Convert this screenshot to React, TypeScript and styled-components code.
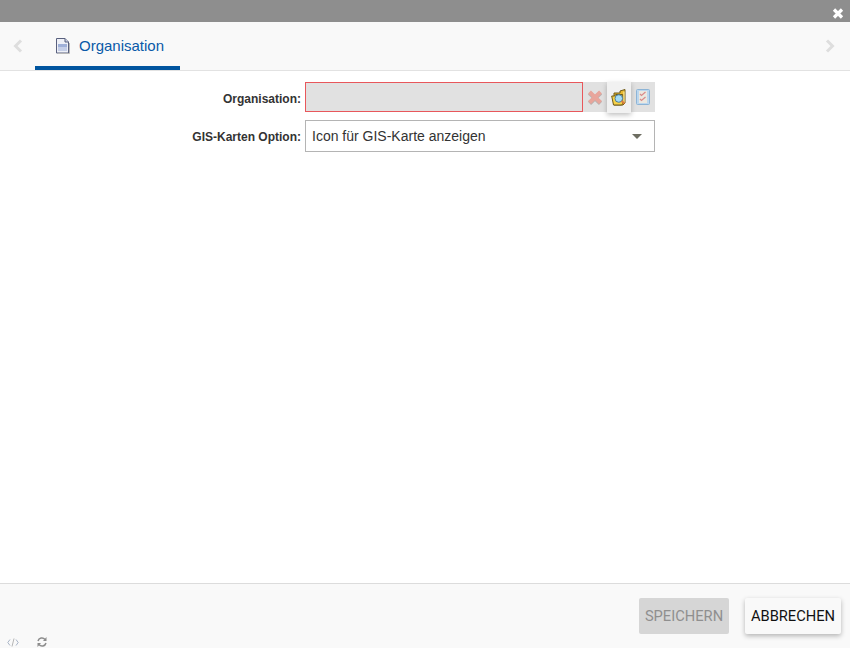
import React from "react";
import styled, { createGlobalStyle } from "styled-components";

const Global = createGlobalStyle`
  html, body { margin: 0; padding: 0; background: #fff; }
  body { font-family: "Liberation Sans", Arial, sans-serif; }
`;

const Page = styled.div`
  width: 850px;
  height: 648px;
  display: flex;
  flex-direction: column;
  overflow: hidden;
  background: #fff;
`;

const TitleBar = styled.div`
  height: 22px;
  flex: none;
  background: #8e8e8e;
  display: flex;
  justify-content: flex-end;
  align-items: flex-start;
  padding: 8px 6px 0 0;
  box-sizing: border-box;
`;

const TabBar = styled.div`
  height: 49px;
  flex: none;
  box-sizing: border-box;
  background: #f9f9f9;
  border-bottom: 1px solid #e2e2e2;
  display: flex;
  align-items: flex-start;
  padding: 0 14px 0 12px;
`;

const Chevron = styled.div`
  width: 12px;
  height: 48px;
  display: flex;
  align-items: center;
  justify-content: center;
`;

const Tab = styled.div`
  width: 145px;
  height: 48px;
  margin-left: 11px;
  box-sizing: border-box;
  border-bottom: 4px solid #00559f;
  display: flex;
  align-items: center;
  padding: 3px 0 0 20px;
  gap: 9px;
  color: #0a5aa8;
  font-size: 15px;
`;

const Spacer = styled.div`
  flex: 1;
`;

const Body = styled.div`
  flex: 1;
  padding-top: 11px;
  display: flex;
  flex-direction: column;
  gap: 8px;
`;

const Row = styled.div<{ $h: number }>`
  display: flex;
  align-items: flex-start;
  height: ${(p) => p.$h}px;
`;

const Label = styled.label`
  width: 301px;
  flex: none;
  padding-top: 10px;
  text-align: right;
  font-size: 12px;
  line-height: 14px;
  font-weight: bold;
  color: #333;
`;

const ReadonlyInput = styled.div`
  margin-left: 4px;
  width: 278px;
  height: 30px;
  box-sizing: border-box;
  background: #e1e1e1;
  border: 1px solid #e8575b;
`;

const ActionGroup = styled.div`
  display: flex;
  height: 30px;
  width: 72px;
  background: #e1e1e1;
`;

const ActionButton = styled.div<{ $active?: boolean }>`
  width: 24px;
  height: ${(p) => (p.$active ? 31 : 30)}px;
  display: flex;
  align-items: center;
  justify-content: center;
  background: ${(p) => (p.$active ? "#f1f1f1" : "transparent")};
  box-shadow: ${(p) => (p.$active ? "0 2px 5px rgba(0,0,0,.25)" : "none")};
`;

const Select = styled.div`
  margin-left: 4px;
  width: 350px;
  height: 32px;
  box-sizing: border-box;
  border: 1px solid #b4b4b4;
  background: #fff;
  display: flex;
  align-items: center;
  justify-content: space-between;
  padding: 0 12px 0 6px;
  font-size: 14px;
  color: #333;
`;

const Caret = styled.div`
  width: 0;
  height: 0;
  border-left: 5px solid transparent;
  border-right: 5px solid transparent;
  border-top: 5px solid #6e6e62;
`;

const Footer = styled.div`
  height: 65px;
  flex: none;
  box-sizing: border-box;
  background: #f9f9f9;
  border-top: 1px solid #dcdcdc;
  position: relative;
  display: flex;
  justify-content: flex-end;
  align-items: flex-start;
  gap: 16px;
  padding: 14px 9px 0 0;
`;

const FooterButton = styled.div<{ $primary?: boolean; $w: number }>`
  width: ${(p) => p.$w}px;
  height: 36px;
  border-radius: 2px;
  display: flex;
  align-items: center;
  justify-content: center;
  font-family: Roboto, "Liberation Sans", sans-serif;
  font-size: 14.7px;
  background: ${(p) => (p.$primary ? "#f9f9f9" : "#d6d6d6")};
  color: ${(p) => (p.$primary ? "#111" : "#8f8f8f")};
  box-shadow: ${(p) => (p.$primary ? "0 2px 5px rgba(0,0,0,.28)" : "none")};
`;

const DebugIcons = styled.div`
  position: absolute;
  left: 7px;
  bottom: 1px;
  display: flex;
  align-items: center;
  gap: 18px;
`;

const ChevronIcon = ({ right }: { right?: boolean }) => (
  <svg width="10" height="14" viewBox="0 0 10 14">
    <path
      d={right ? "M2 1.5 7.5 7 2 12.5" : "M8 1.5 2.5 7 8 12.5"}
      fill="none"
      stroke="#dedede"
      strokeWidth="3"
    />
  </svg>
);

const DocIcon = () => (
  <svg width="15" height="16" viewBox="0 0 15 16">
    <path d="M1.5.5h8.5l3.500 3.500v11h-12z" fill="#eef0f7" stroke="#59607e" />
    <path d="M10 .5v3.500h3.500" fill="#c9cfe2" stroke="#59607e" />
    <rect x="3" y="6" width="9" height="3" fill="#9fb0d8" />
    <rect x="3" y="9" width="9" height="4" fill="#c5cfe8" />
    <path d="M14.500 5v10.500H3" fill="none" stroke="#b8b8b8" />
  </svg>
);

const CloseIcon = () => (
  <svg width="12" height="11" viewBox="0 0 12 11">
    <path d="M2 1.500l8 8M10 1.500l-8 8" stroke="#fff" strokeWidth="3.200" />
  </svg>
);

const RedX = () => (
  <svg width="16" height="16" viewBox="0 0 16 16">
    <path d="M2.500 3 13.500 13.500M13.500 3 2.500 13.500" stroke="#b9b0ae" strokeWidth="4.500" transform="translate(0 .8)" />
    <path d="M2.500 3 13.500 13.500M13.500 3 2.500 13.500" stroke="#e8a59b" strokeWidth="4" />
  </svg>
);

const FolderIcon = () => (
  <svg width="16" height="18" viewBox="0 0 16 18">
    <path d="M3 4h6V2l5-1.500V14l-2 2H3z" fill="#e8b92e" stroke="#6f5a18" />
    <path d="M.7 7h3l1-1.500h7v9l-1 1.500H2.500z" fill="#f7d24a" stroke="#6f5a18" />
    <path d="M13 2.500V14" stroke="#fff2b0" />
    <circle cx="7.800" cy="9.500" r="3.800" fill="#a4dcf5" stroke="#4d7f9c" />
    <path d="M10.500 12l3 2.500" stroke="#dc7c3e" strokeWidth="2" />
  </svg>
);

const CheckIcon = () => (
  <svg width="14" height="16" viewBox="0 0 14 16">
    <rect x=".5" y=".5" width="13" height="15" rx="1" fill="#bcd7ee" stroke="#8db4d6" />
    <rect x="3" y="2" width="8" height="12" fill="#ece8e0" />
    <path d="M4 5l1.500 1.500L9.500 3M4 10l1.500 1.500L9.500 8" fill="none" stroke="#d98a8a" strokeWidth="1.200" />
  </svg>
);

const CodeIcon = () => (
  <svg width="12" height="9" viewBox="0 0 12 9">
    <path d="M3 1.500 .8 4.500 3 7.500M9 1.500l2.200 3L9 7.500" fill="none" stroke="#a9b4c6" />
    <path d="M7 .5 5 8.500" stroke="#b5b5b5" />
  </svg>
);

const RefreshIcon = () => (
  <svg width="10" height="10" viewBox="0 0 10 10">
    <path d="M1 4a4 4 0 0 1 7-1.500M9 6a4 4 0 0 1-7 1.500" fill="none" stroke="#8c8c8c" strokeWidth="1.500" />
    <path d="M9.500 0v4h-3.500zM.5 10V6h3.500z" fill="#8c8c8c" />
  </svg>
);

export default function App() {
  return (
    <Page>
      <Global />
      <TitleBar>
        <CloseIcon />
      </TitleBar>
      <TabBar>
        <Chevron>
          <ChevronIcon />
        </Chevron>
        <Tab>
          <DocIcon />
          Organisation
        </Tab>
        <Spacer />
        <Chevron>
          <ChevronIcon right />
        </Chevron>
      </TabBar>
      <Body>
        <Row $h={30}>
          <Label>Organisation:</Label>
          <ReadonlyInput />
          <ActionGroup>
            <ActionButton>
              <RedX />
            </ActionButton>
            <ActionButton $active>
              <FolderIcon />
            </ActionButton>
            <ActionButton>
              <CheckIcon />
            </ActionButton>
          </ActionGroup>
        </Row>
        <Row $h={32}>
          <Label>GIS-Karten Option:</Label>
          <Select>
            Icon für GIS-Karte anzeigen
            <Caret />
          </Select>
        </Row>
      </Body>
      <Footer>
        <FooterButton $w={90}>SPEICHERN</FooterButton>
        <FooterButton $w={96} $primary>
          ABBRECHEN
        </FooterButton>
        <DebugIcons>
          <CodeIcon />
          <RefreshIcon />
        </DebugIcons>
      </Footer>
    </Page>
  );
}
